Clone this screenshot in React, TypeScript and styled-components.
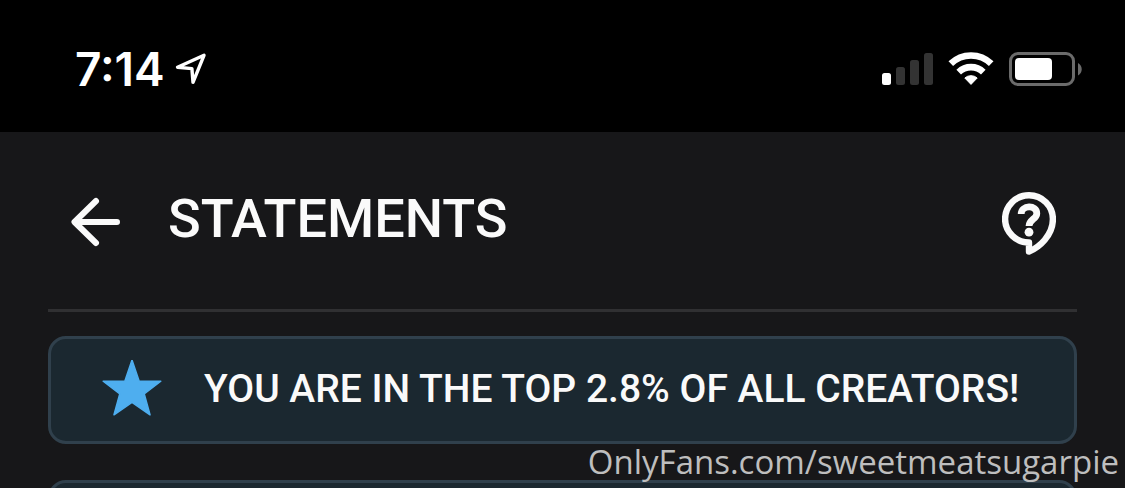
import React from "react";
import styled, { createGlobalStyle } from "styled-components";

const GlobalStyle = createGlobalStyle`
  * { box-sizing: border-box; }
  body {
    margin: 0;
    background: #171719;
    color: #fafafa;
    font-family: Roboto, "Liberation Sans", sans-serif;
  }
`;

const Screen = styled.div`
  position: relative;
  height: 100vh;
  overflow: hidden;
  background: #171719;
`;

const StatusBar = styled.div`
  display: flex;
  align-items: center;
  justify-content: space-between;
  height: 132px;
  padding: 6px 42px 0 75px;
  background: #000;
`;

const StatusGroup = styled.div<{ $gap: number }>`
  display: flex;
  align-items: center;
  gap: ${({ $gap }) => $gap}px;
`;

const Clock = styled.time`
  color: #fff;
  font: 600 46px/52px Inter, "Liberation Sans", sans-serif;
`;

const Glyph = styled.svg`
  display: block;
  flex: none;
`;

const Content = styled.main`
  padding: 0 48px;
`;

const Header = styled.header`
  display: flex;
  align-items: center;
  height: 180px;
  padding: 2px 21px 0 20px;
  border-bottom: 3px solid #303032;
`;

const IconButton = styled.button`
  padding: 0;
  border: 0;
  background: none;
  color: inherit;
  cursor: pointer;
`;

const Title = styled.h1`
  flex: 1;
  margin: 0;
  padding: 0 0 6px 46px;
  font-size: 54px;
  font-weight: 500;
  line-height: 64px;
`;

const Cards = styled.div`
  display: flex;
  flex-direction: column;
  gap: 36px;
  padding-top: 24px;
`;

const Card = styled.section`
  display: flex;
  align-items: center;
  gap: 42px;
  min-height: 108px;
  padding: 0 51px;
  border: 3px solid #30404c;
  border-radius: 18px;
  background: #1b2830;
`;

const CardText = styled.p`
  margin: 0;
  padding-bottom: 2px;
  font-size: 39px;
  font-weight: 500;
  line-height: 48px;
  white-space: nowrap;
`;

const Watermark = styled.div`
  position: absolute;
  right: 6px;
  bottom: 3px;
  color: #bebebe;
  font: 400 33px/46px "Open Sans", "Noto Sans", sans-serif;
`;

const LocationIcon = () => (
  <Glyph width="32" height="32" viewBox="0 0 32 32" aria-label="Location in use">
    <path d="M2.5 14.2 29 2.3 18 29.3 16.9 15.6Z" fill="none" stroke="#fff" strokeWidth="3.4" strokeLinejoin="round" />
  </Glyph>
);

const SignalIcon = () => (
  <Glyph width="51" height="34" viewBox="0 0 51 34" aria-label="Signal strength">
    <rect x="0" y="21" width="9" height="12" rx="2.5" fill="#fff" />
    <g fill="#333">
      <rect x="14" y="15" width="9" height="18" rx="2.5" />
      <rect x="28" y="8" width="9" height="25" rx="2.5" />
      <rect x="42" y="1" width="9" height="32" rx="2.5" />
    </g>
  </Glyph>
);

const WifiIcon = () => (
  <Glyph width="46" height="34" viewBox="0 0 46 34" aria-label="Wi-Fi">
    <g fill="none" stroke="#fff" strokeWidth="6.6">
      <path d="M2.8 11.7A29 29 0 0 1 43.2 11.7" />
      <path d="M10.7 20.1A17.7 17.7 0 0 1 35.3 20.1" />
    </g>
    <path d="M16.8 26a9.4 9.4 0 0 1 12.4 0L23 32.4Z" fill="#fff" stroke="#fff" strokeWidth="1" strokeLinejoin="round" />
  </Glyph>
);

const BatteryIcon = () => (
  <Glyph width="74" height="34" viewBox="0 0 74 34" aria-label="Battery">
    <rect x="1.5" y="1.5" width="63" height="31" rx="7.5" fill="none" stroke="#6b6b6b" strokeWidth="3" />
    <rect x="6" y="6" width="37" height="22" rx="4" fill="#fff" />
    <path d="M69 11c5 2.5 5 10 0 12.5Z" fill="#6b6b6b" />
  </Glyph>
);

const BackIcon = () => (
  <Glyph width="54" height="54" viewBox="0 0 54 54">
    <path d="M28 6 6.5 27 28 48M7 27H49" fill="none" stroke="#fafafa" strokeWidth="6" strokeLinecap="round" strokeLinejoin="round" />
  </Glyph>
);

const HelpIcon = () => (
  <Glyph width="54" height="68" viewBox="0 -4 54 68">
    <path d="M27 3.2A23.9 23.9 0 0 0 3.1 27.1C3.1 40 14 50.5 27 50.5V59.5C37 55.5 50.9 43.5 50.9 27.1A23.9 23.9 0 0 0 27 3.2Z" fill="none" stroke="#fafafa" strokeWidth="6.4" strokeLinejoin="round" />
    <path d="M19.2 22C19.2 13 34.8 12.4 34.8 21.4C34.8 27 27.2 27.5 27 34" fill="none" stroke="#fafafa" strokeWidth="6.8" />
    <circle cx="27" cy="40.2" r="4.4" fill="#fafafa" />
  </Glyph>
);

const StarIcon = () => (
  <Glyph width="60" height="60" viewBox="0 0 60 60">
    <path d="M30 0 37.2 21.2H58.8L42.2 33.8 48 54.8 30 42.3 12 54.8 17.8 33.8 1.2 21.2H22.8Z" fill="#4eaeef" stroke="#4eaeef" strokeWidth="1.5" strokeLinejoin="round" />
  </Glyph>
);

export default function App() {
  return (
    <Screen>
      <GlobalStyle />
      <StatusBar>
        <StatusGroup $gap={10}>
          <Clock>7:14</Clock>
          <LocationIcon />
        </StatusGroup>
        <StatusGroup $gap={15}>
          <SignalIcon />
          <WifiIcon />
          <BatteryIcon />
        </StatusGroup>
      </StatusBar>
      <Content>
        <Header>
          <IconButton type="button" aria-label="Back">
            <BackIcon />
          </IconButton>
          <Title>STATEMENTS</Title>
          <IconButton type="button" aria-label="Help">
            <HelpIcon />
          </IconButton>
        </Header>
        <Cards>
          <Card>
            <StarIcon />
            <CardText>YOU ARE IN THE TOP 2.8% OF ALL CREATORS!</CardText>
          </Card>
          <Card />
        </Cards>
      </Content>
      <Watermark>OnlyFans.com/sweetmeatsugarpie</Watermark>
    </Screen>
  );
}
